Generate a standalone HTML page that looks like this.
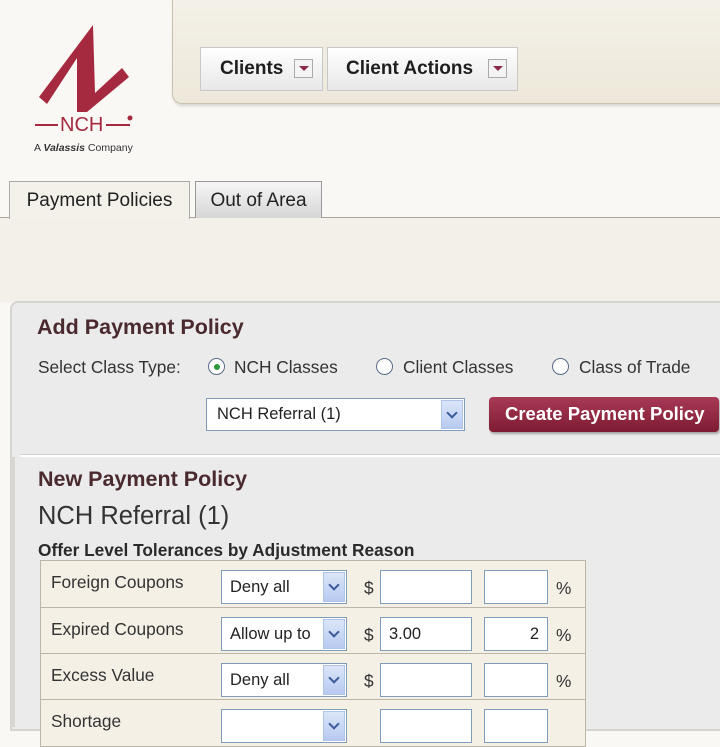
<!DOCTYPE html>
<html><head><style>
*{margin:0;padding:0;box-sizing:border-box}
body{width:720px;height:720px;overflow:hidden;background:#f9f8f5;font-family:"Liberation Sans",Arial,sans-serif;position:relative;color:#222}
.abs{position:absolute}
.hdr{left:172px;top:-10px;width:560px;height:114px;background:linear-gradient(#f4f1e9,#ede8da);border:1px solid #c9c3b0;border-radius:10px;box-shadow:1px 2px 3px rgba(0,0,0,.15)}
.btn{top:47px;height:44px;background:linear-gradient(#fff,#e8e8e8);border:1px solid #c8c8c8;font-weight:bold;font-size:19px;color:#1e1e1e;line-height:42px}
.dd{position:absolute;top:11px;width:19px;height:19px;border:1px solid #aaa;background:#f4f4f4}
.dd:after{content:"";position:absolute;left:4px;top:6px;border-left:5px solid transparent;border-right:5px solid transparent;border-top:5px solid #8a2a4a}
.tab{top:181px;height:37px;border:1px solid #aaa;border-bottom:none;font-size:19px;line-height:38px;text-align:center;color:#222}
.panel{left:10px;top:301px;width:720px;height:430px;background:#ebebeb;border:2px solid #d6d4cf;border-radius:8px 0 0 0}
.sel{background:#fff;border:1px solid #7f9db9;font-size:16.5px;white-space:nowrap;overflow:hidden}
.arr{position:absolute;right:1px;top:1px;bottom:1px;width:22px;background:linear-gradient(#dbe6f8,#b7caf0);border:1px solid #b0c4ea}
.arr:after{content:"";position:absolute;left:6px;top:8px;width:6px;height:6px;border-right:2px solid #3a5a9a;border-bottom:2px solid #3a5a9a;transform:rotate(45deg)}
.radio{width:17px;height:17px;border:1px solid #5a6a88;border-radius:50%;background:#fff}
.t{font-size:17.3px;color:#333}
.row{position:absolute;left:40px;width:546px;height:48px;background:#f4f0e6;border:1px solid #bcb6a6}
.row .l{position:absolute;left:10px;top:11px;font-size:17.3px;color:#333}
.in{position:absolute;top:9px;height:34px;background:#fff;border:1px solid #7f9db9;font-size:16.5px;line-height:32px;padding:0 8px}
.w{left:180px;width:126px}
</style></head><body>
<svg class="abs" style="left:30px;top:20px" width="110" height="135" viewBox="0 0 110 135">
<polygon points="9,77 63,5 65,73 92,48 99,57 57,92 47,92 47,38 17,84" fill="#a62a3f"/>
<text x="30" y="111" font-family="Liberation Sans" font-size="20" fill="#a62a3f">NCH</text>
<rect x="5" y="104" width="23" height="2" fill="#a62a3f"/><rect x="76" y="104" width="24" height="2" fill="#a62a3f"/>
<circle cx="100" cy="98" r="2.5" fill="#a62a3f"/>
<text x="4" y="131" font-family="Liberation Sans" font-size="10.5" fill="#333">A <tspan font-weight="bold" font-style="italic">Valassis</tspan> Company</text>
</svg>
<div class="abs hdr"></div>
<div class="abs btn" style="left:200px;width:123px;padding-left:19px">Clients<span class="dd" style="left:93px"></span></div>
<div class="abs btn" style="left:327px;width:191px;padding-left:18px">Client Actions<span class="dd" style="left:160px"></span></div>
<div class="abs" style="left:0;top:217px;width:720px;height:85px;background:#f3f0ea;border-top:1px solid #a9a49a"></div>
<div class="abs tab" style="left:9px;width:181px;height:38px;background:#f4f1ea">Payment Policies</div>
<div class="abs tab" style="left:195px;width:127px;background:linear-gradient(#f6f6f6,#d6d6d6);border-color:#999">Out of Area</div>
<div class="abs panel"></div>
<div class="abs" style="left:37px;top:315px;font-size:21.5px;font-weight:bold;color:#4a2a2e">Add Payment Policy</div>
<div class="abs t" style="left:38px;top:357px">Select Class Type:</div>
<div class="abs radio" style="left:208px;top:358px"><div style="width:6px;height:6px;margin:4.5px;border-radius:50%;background:#2a9a3a"></div></div>
<div class="abs t" style="left:234px;top:357px">NCH Classes</div>
<div class="abs radio" style="left:376px;top:358px"></div>
<div class="abs t" style="left:403px;top:357px">Client Classes</div>
<div class="abs radio" style="left:552px;top:358px"></div>
<div class="abs t" style="left:579px;top:357px">Class of Trade</div>
<div class="abs sel" style="left:206px;top:398px;width:259px;height:33px;padding:6px 0 0 10px">NCH Referral (1)<span class="arr"></span></div>
<div class="abs" style="left:489px;top:397px;width:230px;height:35px;background:linear-gradient(#a83a55,#7e1b33);border-radius:4px;box-shadow:1px 2px 2px rgba(0,0,0,.3);color:#fff;font-weight:bold;font-size:18.5px;line-height:34px;padding-left:16px;white-space:nowrap">Create Payment Policy</div>
<div class="abs" style="left:20px;top:454px;width:700px;height:3px;background:#fff;border-top:1px solid #d0d0d0"></div>
<div class="abs" style="left:12px;top:457px;width:3px;height:270px;background:#d8d6d0"></div>
<div class="abs" style="left:38px;top:467px;font-size:21.5px;font-weight:bold;color:#4a2a2e">New Payment Policy</div>
<div class="abs" style="left:38px;top:502px;font-size:25.5px;color:#333">NCH Referral (1)</div>
<div class="abs" style="left:38px;top:540px;font-size:17.3px;font-weight:bold;color:#2a2a2a">Offer Level Tolerances by Adjustment Reason</div>
<div class="row" style="top:560px"><span class="l">Foreign Coupons</span><div class="in sel w">Deny all<span class="arr"></span></div><span class="l" style="left:323px;top:17px">$</span><div class="in" style="left:339px;width:92px"></div><div class="in" style="left:443px;width:64px"></div><span class="l" style="left:515px;top:17px">%</span></div>
<div class="row" style="top:607px"><span class="l">Expired Coupons</span><div class="in sel w">Allow up to<span class="arr"></span></div><span class="l" style="left:323px;top:17px">$</span><div class="in" style="left:339px;width:92px">3.00</div><div class="in" style="left:443px;width:64px;text-align:right">2</div><span class="l" style="left:515px;top:17px">%</span></div>
<div class="row" style="top:653px"><span class="l">Excess Value</span><div class="in sel w">Deny all<span class="arr"></span></div><span class="l" style="left:323px;top:17px">$</span><div class="in" style="left:339px;width:92px"></div><div class="in" style="left:443px;width:64px"></div><span class="l" style="left:515px;top:17px">%</span></div>
<div class="row" style="top:699px"><span class="l">Shortage</span><div class="in sel w"><span class="arr"></span></div><div class="in" style="left:339px;width:92px"></div><div class="in" style="left:443px;width:64px"></div></div>
</body></html>
